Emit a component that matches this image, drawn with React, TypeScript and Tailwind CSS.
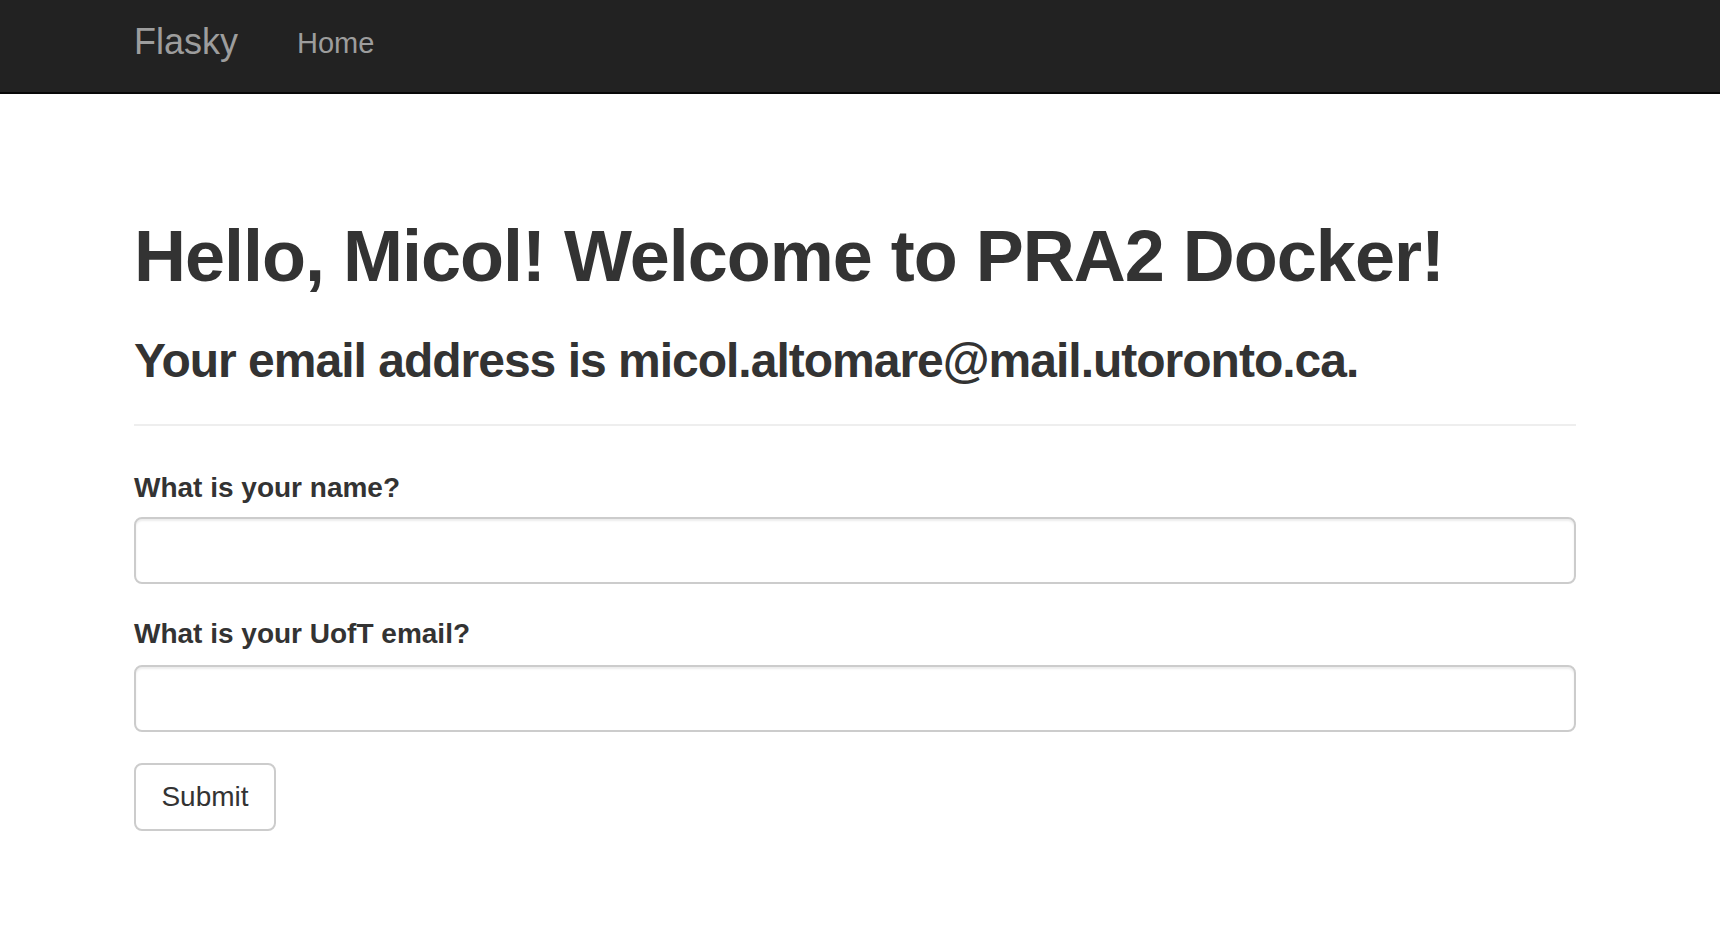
import { useState } from "react";

export default function App() {
  const [name, setName] = useState("");
  const [email, setEmail] = useState("");

  return (
    <div className="min-h-screen bg-white text-[#333] font-['Liberation_Sans',Arial,sans-serif]">
      <nav className="h-[94px] bg-[#222] border-b-2 border-[#080808]">
        <div className="ml-[134px] flex items-start">
          <a className="mt-[22px] text-[36px] leading-[40px] text-[#9d9d9d]" href="#">
            Flasky
          </a>
          <a className="ml-[59px] mt-[27px] text-[29px] leading-[32px] text-[#9d9d9d]" href="#">
            Home
          </a>
        </div>
      </nav>

      <main className="ml-[134px] w-[1442px] flex flex-col">
        <h1 className="mt-[122px] text-[72px] leading-[80px] font-bold tracking-[-1px]">
          Hello, Micol! Welcome to PRA2 Docker!
        </h1>
        <h3 className="mt-[38px] text-[48px] leading-[53px] font-bold tracking-[-1px]">
          Your email address is micol.altomare@mail.utoronto.ca.
        </h3>
        <hr className="mt-[37px] border-0 border-t-2 border-[#eee]" />

        <form
          className="flex flex-col"
          onSubmit={(e) => {
            e.preventDefault();
          }}
        >
          <label className="mt-[46px] text-[28px] leading-[31px] font-bold" htmlFor="name">
            What is your name?
          </label>
          <input
            id="name"
            value={name}
            onChange={(e) => setName(e.target.value)}
            className="mt-[14px] h-[67px] w-full rounded-[8px] border-2 border-[#ccc] bg-white px-[24px] text-[28px] shadow-[inset_0_2px_2px_rgba(0,0,0,0.075)] outline-none"
          />
          <label className="mt-[34px] text-[28px] leading-[31px] font-bold" htmlFor="email">
            What is your UofT email?
          </label>
          <input
            id="email"
            value={email}
            onChange={(e) => setEmail(e.target.value)}
            className="mt-[16px] h-[67px] w-full rounded-[8px] border-2 border-[#ccc] bg-white px-[24px] text-[28px] shadow-[inset_0_2px_2px_rgba(0,0,0,0.075)] outline-none"
          />
          <div>
            <button
              type="submit"
              className="mt-[31px] h-[68px] w-[142px] rounded-[8px] border-2 border-[#ccc] bg-white text-[28px] text-[#333]"
            >
              Submit
            </button>
          </div>
        </form>
      </main>
    </div>
  );
}
